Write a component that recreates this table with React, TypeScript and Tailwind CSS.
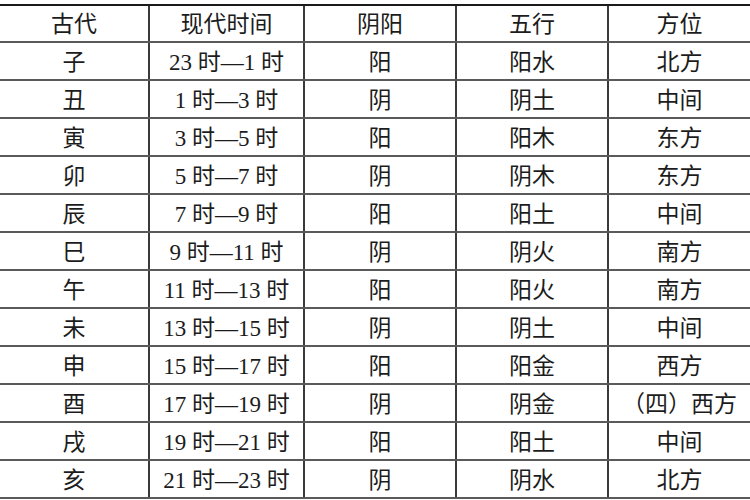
const rows = [
  ["子", "23 时—1 时", "阳", "阳水", "北方"],
  ["丑", "1 时—3 时", "阴", "阴土", "中间"],
  ["寅", "3 时—5 时", "阳", "阳木", "东方"],
  ["卯", "5 时—7 时", "阴", "阴木", "东方"],
  ["辰", "7 时—9 时", "阳", "阳土", "中间"],
  ["巳", "9 时—11 时", "阴", "阴火", "南方"],
  ["午", "11 时—13 时", "阳", "阳火", "南方"],
  ["未", "13 时—15 时", "阴", "阴土", "中间"],
  ["申", "15 时—17 时", "阳", "阳金", "西方"],
  ["酉", "17 时—19 时", "阴", "阴金", "（四）西方"],
  ["戌", "19 时—21 时", "阳", "阳土", "中间"],
  ["亥", "21 时—23 时", "阴", "阴水", "北方"],
];

const header = ["古代", "现代时间", "阴阳", "五行", "方位"];

function Row({ cells, isHeader }: { cells: string[]; isHeader?: boolean }) {
  return (
    <div
      className={`grid grid-cols-[148px_155px_152px_152px_143px] border-b-2 border-[#5a5a5a] ${
        isHeader ? "h-[37px]" : "h-[38px]"
      }`}
    >
      {cells.map((c, i) => (
        <div
          key={i}
          className={`flex items-center justify-center whitespace-nowrap pt-[2px] ${
            i > 0 ? "border-l-2 border-[#3a3a3a]" : ""
          }`}
        >
          {c}
        </div>
      ))}
    </div>
  );
}

export default function App() {
  return (
    <div
      className="w-[750px] h-[500px] overflow-hidden bg-white pt-[4px] text-[23px] text-[#1c1c1c] leading-none"
      style={{ fontFamily: '"Liberation Serif", "Noto Sans CJK SC", serif' }}
    >
      <div className="border-t-2 border-[#1a1a1a]">
        <Row cells={header} isHeader />
        {rows.map((r) => (
          <Row key={r[0]} cells={r} />
        ))}
      </div>
    </div>
  );
}
